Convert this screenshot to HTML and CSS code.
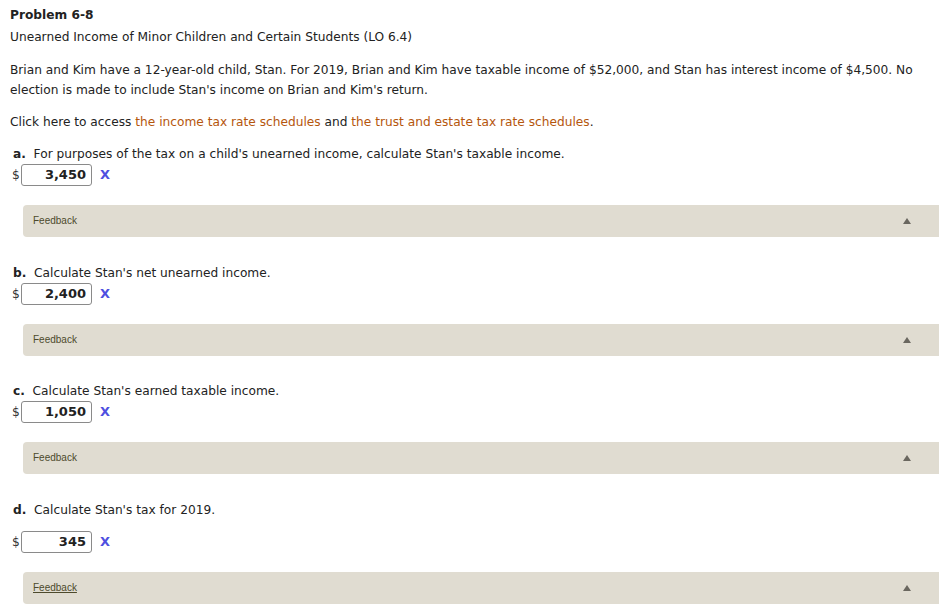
FILE: index.html
```html
<!DOCTYPE html>
<html>
<head>
<meta charset="utf-8">
<link rel="stylesheet" href="styles.css">
</head>
<body>
<div class="page">
  <div class="title">Problem 6-8</div>
  <div class="subtitle">Unearned Income of Minor Children and Certain Students (LO 6.4)</div>
  <p class="intro">Brian and Kim have a 12-year-old child, Stan. For 2019, Brian and Kim have taxable income of $52,000, and Stan has interest income of $4,500. No election is made to include Stan's income on Brian and Kim's return.</p>
  <p class="links">Click here to access <span class="link">the income tax rate schedules</span> and <span class="link">the trust and estate tax rate schedules</span>.</p>

  <section class="part">
    <div class="q"><b>a.</b>&nbsp; For purposes of the tax on a child's unearned income, calculate Stan's taxable income.</div>
    <div class="answer"><span class="cur">$</span><span class="input">3,450</span><span class="x">X</span></div>
    <div class="feedback"><span class="fb-label">Feedback</span><span class="tri"></span></div>
  </section>

  <section class="part">
    <div class="q"><b>b.</b>&nbsp; Calculate Stan's net unearned income.</div>
    <div class="answer"><span class="cur">$</span><span class="input">2,400</span><span class="x">X</span></div>
    <div class="feedback"><span class="fb-label">Feedback</span><span class="tri"></span></div>
  </section>

  <section class="part">
    <div class="q"><b>c.</b>&nbsp; Calculate Stan's earned taxable income.</div>
    <div class="answer"><span class="cur">$</span><span class="input">1,050</span><span class="x">X</span></div>
    <div class="feedback"><span class="fb-label">Feedback</span><span class="tri"></span></div>
  </section>

  <section class="part part-d">
    <div class="q"><b>d.</b>&nbsp; Calculate Stan's tax for 2019.</div>
    <div class="answer"><span class="cur">$</span><span class="input">345</span><span class="x">X</span></div>
    <div class="feedback"><span class="fb-label fb-under">Feedback</span><span class="tri"></span></div>
  </section>
</div>
</body>
</html>
```
FILE: styles.css
```css
html, body {
  margin: 0;
  padding: 0;
  background: #ffffff;
  overflow: hidden;
}
body {
  font-family: "DejaVu Sans", Verdana, sans-serif;
  font-size: 12.2px;
  color: #222222;
  line-height: 20px;
}
.page {
  padding: 5px 0 0 10px;
}
.title {
  font-weight: bold;
}
.subtitle {
  margin-top: 2px;
}
.intro {
  margin: 13px 0 0 0;
  padding-right: 20px;
}
.links {
  margin: 12px 0 0 0;
}
.link {
  color: #b5560d;
}
.part {
  margin-top: 12px;
}
.part + .part {
  margin-top: 25.5px;
}
.q {
  padding-left: 3px;
}
.answer {
  display: flex;
  align-items: center;
  margin-top: 0;
  height: 22px;
}
.part-d .answer {
  margin-top: 11.5px;
}
.cur {
  width: 9px;
  padding-left: 2px;
  color: #333;
}
.input {
  box-sizing: border-box;
  width: 71px;
  height: 22px;
  border: 1px solid #8a8a8a;
  border-radius: 3px;
  text-align: right;
  font-weight: bold;
  padding-right: 5px;
  line-height: 20px;
  font-size: 13px;
  color: #222;
}
.x {
  margin-left: 8px;
  color: #4f4fe0;
  font-weight: bold;
  font-size: 13px;
}
.feedback {
  display: flex;
  align-items: center;
  justify-content: space-between;
  margin: 19px -20px 0 13px;
  height: 32px;
  background: #e0dcd1;
  border-radius: 4px 0 0 4px;
  padding: 0 48px 0 10px;
}
.fb-label {
  font-family: "Liberation Sans", Arial, sans-serif;
  font-size: 10px;
  color: #4d4a2c;
}
.fb-under {
  text-decoration: underline;
}
.tri {
  width: 0;
  height: 0;
  border-left: 4px solid transparent;
  border-right: 4px solid transparent;
  border-bottom: 6px solid #6a675f;
}
```
